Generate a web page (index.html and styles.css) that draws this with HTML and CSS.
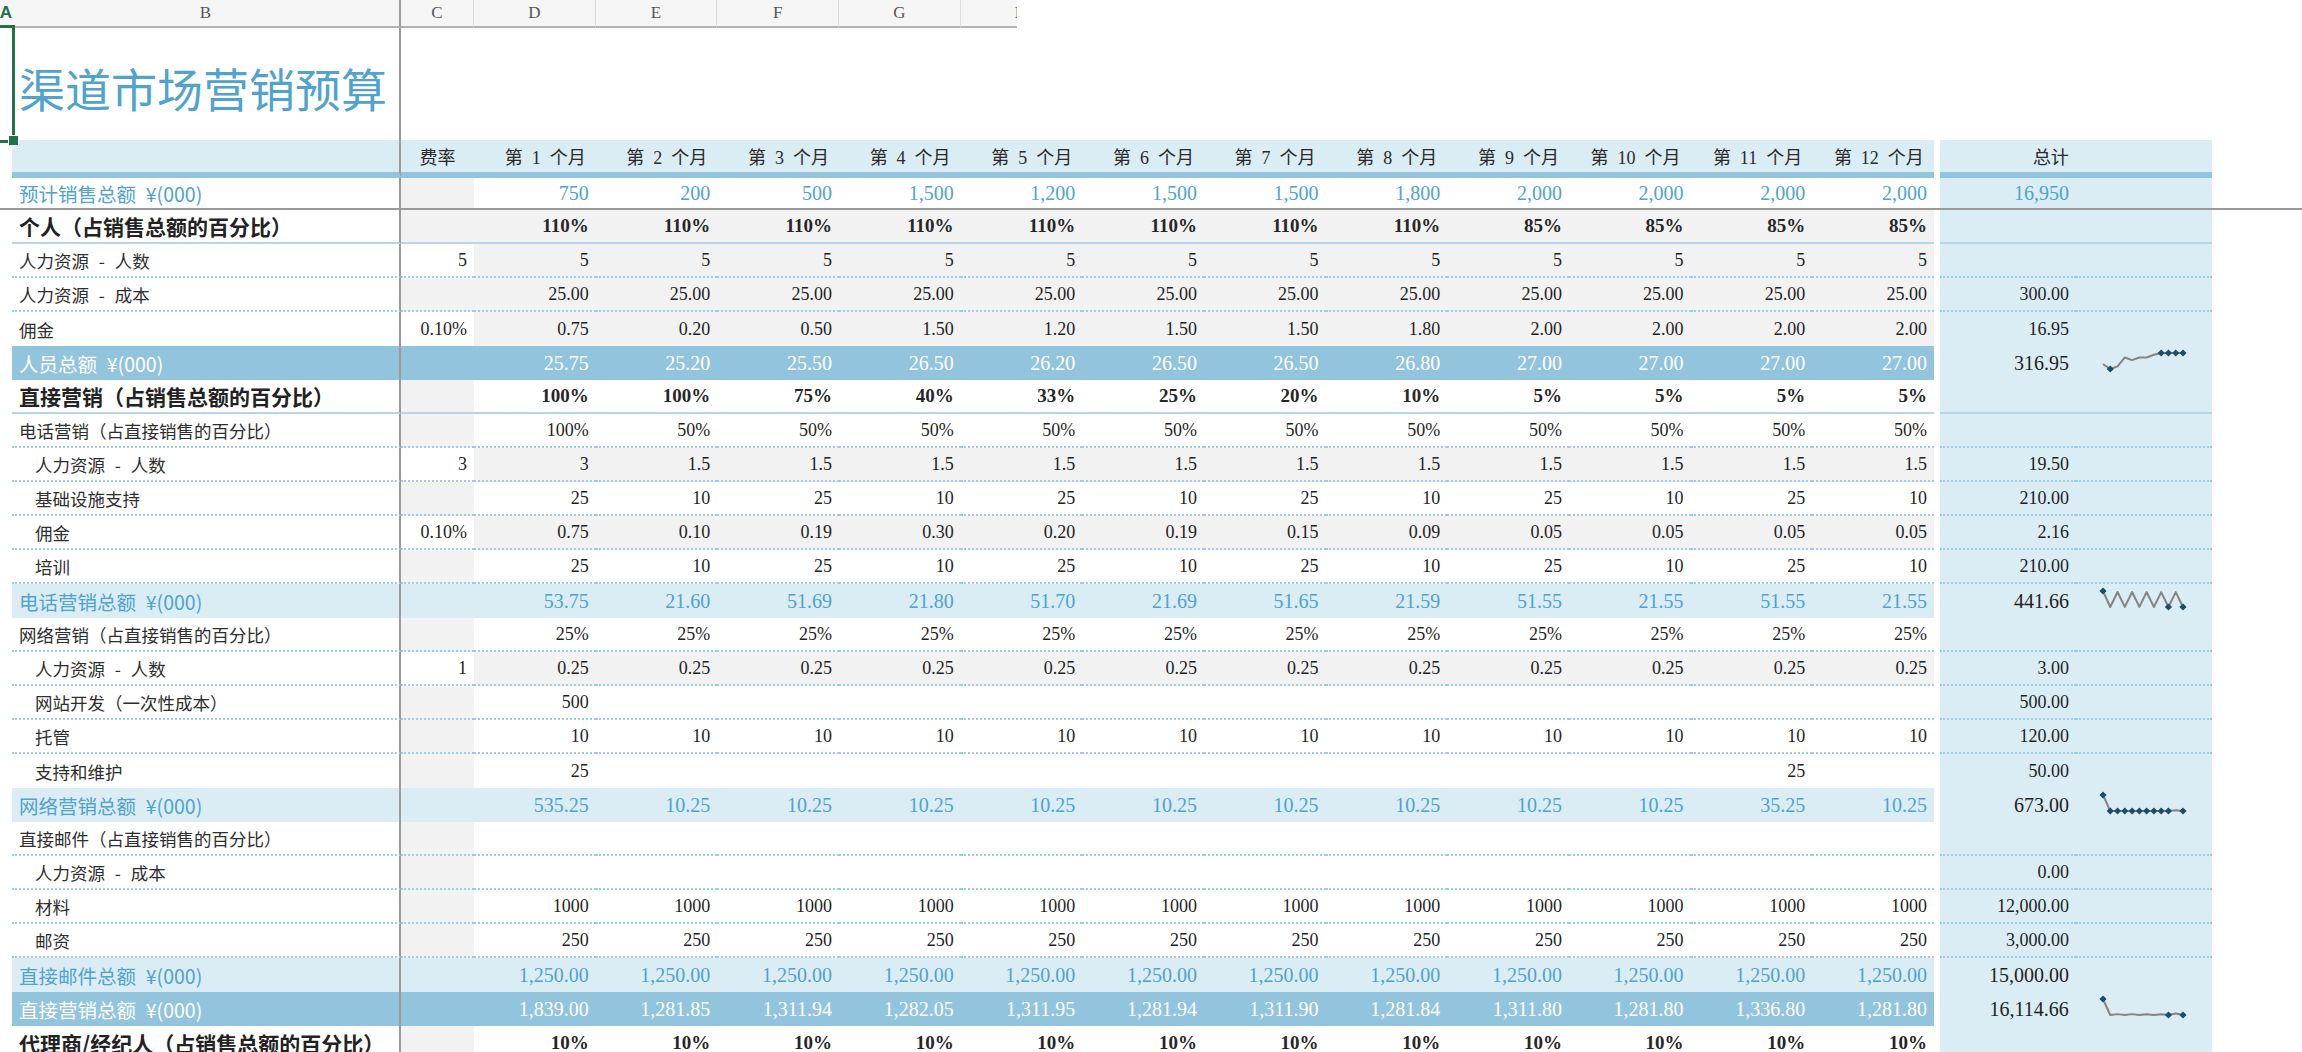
FILE: index.html
```html
<!DOCTYPE html>
<html lang="zh-CN">
<head>
<meta charset="utf-8">
<title>渠道市场营销预算</title>
<link rel="stylesheet" href="styles.css">
</head>
<body>
<div class="colhead">
  <div class="ha">A</div><div class="hb">B</div><div>C</div><div>D</div><div>E</div><div>F</div><div>G</div><div>H</div>
</div>
<div class="titlerow"><div class="a"></div><div class="b">渠道市场营销预算</div><div></div></div>

<div class="row hdr"><div class="a"></div><div class="b"></div><div class="c">费率</div><div class="m">第&ensp;1&ensp;个月</div><div class="m">第&ensp;2&ensp;个月</div><div class="m">第&ensp;3&ensp;个月</div><div class="m">第&ensp;4&ensp;个月</div><div class="m">第&ensp;5&ensp;个月</div><div class="m">第&ensp;6&ensp;个月</div><div class="m">第&ensp;7&ensp;个月</div><div class="m">第&ensp;8&ensp;个月</div><div class="m">第&ensp;9&ensp;个月</div><div class="m">第&ensp;10&ensp;个月</div><div class="m">第&ensp;11&ensp;个月</div><div class="m">第&ensp;12&ensp;个月</div><div class="gap"></div><div class="t">总计</div><div class="s"></div><div class="f"></div></div>

<div class="row sales"><div class="a"></div><div class="b">预计销售总额&ensp;¥(000)</div><div class="c"></div><div class="m">750</div><div class="m">200</div><div class="m">500</div><div class="m">1,500</div><div class="m">1,200</div><div class="m">1,500</div><div class="m">1,500</div><div class="m">1,800</div><div class="m">2,000</div><div class="m">2,000</div><div class="m">2,000</div><div class="m">2,000</div><div class="gap"></div><div class="t">16,950</div><div class="s"></div><div class="f"></div></div>

<div class="row sec sol g"><div class="a"></div><div class="b">个人（占销售总额的百分比）</div><div class="c"></div><div class="m">110%</div><div class="m">110%</div><div class="m">110%</div><div class="m">110%</div><div class="m">110%</div><div class="m">110%</div><div class="m">110%</div><div class="m">110%</div><div class="m">85%</div><div class="m">85%</div><div class="m">85%</div><div class="m">85%</div><div class="gap"></div><div class="t"></div><div class="s"></div><div class="f"></div></div>

<div class="row dot g"><div class="a"></div><div class="b">人力资源&ensp;&#8202;-&#8202;&ensp;人数</div><div class="c in">5</div><div class="m">5</div><div class="m">5</div><div class="m">5</div><div class="m">5</div><div class="m">5</div><div class="m">5</div><div class="m">5</div><div class="m">5</div><div class="m">5</div><div class="m">5</div><div class="m">5</div><div class="m">5</div><div class="gap"></div><div class="t"></div><div class="s"></div><div class="f"></div></div>

<div class="row dot g"><div class="a"></div><div class="b">人力资源&ensp;&#8202;-&#8202;&ensp;成本</div><div class="c"></div><div class="m">25.00</div><div class="m">25.00</div><div class="m">25.00</div><div class="m">25.00</div><div class="m">25.00</div><div class="m">25.00</div><div class="m">25.00</div><div class="m">25.00</div><div class="m">25.00</div><div class="m">25.00</div><div class="m">25.00</div><div class="m">25.00</div><div class="gap"></div><div class="t">300.00</div><div class="s"></div><div class="f"></div></div>

<div class="row g"><div class="a"></div><div class="b">佣金</div><div class="c in">0.10%</div><div class="m">0.75</div><div class="m">0.20</div><div class="m">0.50</div><div class="m">1.50</div><div class="m">1.20</div><div class="m">1.50</div><div class="m">1.50</div><div class="m">1.80</div><div class="m">2.00</div><div class="m">2.00</div><div class="m">2.00</div><div class="m">2.00</div><div class="gap"></div><div class="t">16.95</div><div class="s"></div><div class="f"></div></div>

<div class="row td"><div class="a"></div><div class="b">人员总额&ensp;¥(000)</div><div class="c"></div><div class="m">25.75</div><div class="m">25.20</div><div class="m">25.50</div><div class="m">26.50</div><div class="m">26.20</div><div class="m">26.50</div><div class="m">26.50</div><div class="m">26.80</div><div class="m">27.00</div><div class="m">27.00</div><div class="m">27.00</div><div class="m">27.00</div><div class="gap"></div><div class="t">316.95</div><div class="s"><svg class="spark" width="86" height="20" viewBox="0 0 86 20"><polyline points="3,13.11 10.27,18 17.55,15.33 24.82,6.44 32.09,9.11 39.36,6.44 46.64,6.44 53.91,3.78 61.18,2 68.45,2 75.73,2 83,2"/><path d="M10.27 14.4l3.6 3.6-3.6 3.6-3.6-3.6zM61.18 -1.6l3.6 3.6-3.6 3.6-3.6-3.6zM68.45 -1.6l3.6 3.6-3.6 3.6-3.6-3.6zM75.73 -1.6l3.6 3.6-3.6 3.6-3.6-3.6zM83 -1.6l3.6 3.6-3.6 3.6-3.6-3.6z"/></svg></div><div class="f"></div></div>

<div class="row sec sol"><div class="a"></div><div class="b">直接营销（占销售总额的百分比）</div><div class="c"></div><div class="m">100%</div><div class="m">100%</div><div class="m">75%</div><div class="m">40%</div><div class="m">33%</div><div class="m">25%</div><div class="m">20%</div><div class="m">10%</div><div class="m">5%</div><div class="m">5%</div><div class="m">5%</div><div class="m">5%</div><div class="gap"></div><div class="t"></div><div class="s"></div><div class="f"></div></div>

<div class="row dot"><div class="a"></div><div class="b">电话营销（占直接销售的百分比）</div><div class="c"></div><div class="m">100%</div><div class="m">50%</div><div class="m">50%</div><div class="m">50%</div><div class="m">50%</div><div class="m">50%</div><div class="m">50%</div><div class="m">50%</div><div class="m">50%</div><div class="m">50%</div><div class="m">50%</div><div class="m">50%</div><div class="gap"></div><div class="t"></div><div class="s"></div><div class="f"></div></div>

<div class="row dot g"><div class="a"></div><div class="b i2">人力资源&ensp;&#8202;-&#8202;&ensp;人数</div><div class="c in">3</div><div class="m">3</div><div class="m">1.5</div><div class="m">1.5</div><div class="m">1.5</div><div class="m">1.5</div><div class="m">1.5</div><div class="m">1.5</div><div class="m">1.5</div><div class="m">1.5</div><div class="m">1.5</div><div class="m">1.5</div><div class="m">1.5</div><div class="gap"></div><div class="t">19.50</div><div class="s"></div><div class="f"></div></div>

<div class="row dot"><div class="a"></div><div class="b i2">基础设施支持</div><div class="c"></div><div class="m">25</div><div class="m">10</div><div class="m">25</div><div class="m">10</div><div class="m">25</div><div class="m">10</div><div class="m">25</div><div class="m">10</div><div class="m">25</div><div class="m">10</div><div class="m">25</div><div class="m">10</div><div class="gap"></div><div class="t">210.00</div><div class="s"></div><div class="f"></div></div>

<div class="row dot g"><div class="a"></div><div class="b i2">佣金</div><div class="c in">0.10%</div><div class="m">0.75</div><div class="m">0.10</div><div class="m">0.19</div><div class="m">0.30</div><div class="m">0.20</div><div class="m">0.19</div><div class="m">0.15</div><div class="m">0.09</div><div class="m">0.05</div><div class="m">0.05</div><div class="m">0.05</div><div class="m">0.05</div><div class="gap"></div><div class="t">2.16</div><div class="s"></div><div class="f"></div></div>

<div class="row dot"><div class="a"></div><div class="b i2">培训</div><div class="c"></div><div class="m">25</div><div class="m">10</div><div class="m">25</div><div class="m">10</div><div class="m">25</div><div class="m">10</div><div class="m">25</div><div class="m">10</div><div class="m">25</div><div class="m">10</div><div class="m">25</div><div class="m">10</div><div class="gap"></div><div class="t">210.00</div><div class="s"></div><div class="f"></div></div>

<div class="row tl"><div class="a"></div><div class="b">电话营销总额&ensp;¥(000)</div><div class="c"></div><div class="m">53.75</div><div class="m">21.60</div><div class="m">51.69</div><div class="m">21.80</div><div class="m">51.70</div><div class="m">21.69</div><div class="m">51.65</div><div class="m">21.59</div><div class="m">51.55</div><div class="m">21.55</div><div class="m">51.55</div><div class="m">21.55</div><div class="gap"></div><div class="t">441.66</div><div class="s"><svg class="spark" width="86" height="20" viewBox="0 0 86 20"><polyline points="3,2 10.27,17.98 17.55,3.02 24.82,17.88 32.09,3.02 39.36,17.93 46.64,3.04 53.91,17.98 61.18,3.09 68.45,18 75.73,3.09 83,18"/><path d="M3 -1.6l3.6 3.6-3.6 3.6-3.6-3.6zM68.45 14.4l3.6 3.6-3.6 3.6-3.6-3.6zM83 14.4l3.6 3.6-3.6 3.6-3.6-3.6z"/></svg></div><div class="f"></div></div>

<div class="row dot"><div class="a"></div><div class="b">网络营销（占直接销售的百分比）</div><div class="c"></div><div class="m">25%</div><div class="m">25%</div><div class="m">25%</div><div class="m">25%</div><div class="m">25%</div><div class="m">25%</div><div class="m">25%</div><div class="m">25%</div><div class="m">25%</div><div class="m">25%</div><div class="m">25%</div><div class="m">25%</div><div class="gap"></div><div class="t"></div><div class="s"></div><div class="f"></div></div>

<div class="row dot g"><div class="a"></div><div class="b i2">人力资源&ensp;&#8202;-&#8202;&ensp;人数</div><div class="c in">1</div><div class="m">0.25</div><div class="m">0.25</div><div class="m">0.25</div><div class="m">0.25</div><div class="m">0.25</div><div class="m">0.25</div><div class="m">0.25</div><div class="m">0.25</div><div class="m">0.25</div><div class="m">0.25</div><div class="m">0.25</div><div class="m">0.25</div><div class="gap"></div><div class="t">3.00</div><div class="s"></div><div class="f"></div></div>

<div class="row dot"><div class="a"></div><div class="b i2">网站开发（一次性成本）</div><div class="c"></div><div class="m">500</div><div class="m"></div><div class="m"></div><div class="m"></div><div class="m"></div><div class="m"></div><div class="m"></div><div class="m"></div><div class="m"></div><div class="m"></div><div class="m"></div><div class="m"></div><div class="gap"></div><div class="t">500.00</div><div class="s"></div><div class="f"></div></div>

<div class="row dot"><div class="a"></div><div class="b i2">托管</div><div class="c"></div><div class="m">10</div><div class="m">10</div><div class="m">10</div><div class="m">10</div><div class="m">10</div><div class="m">10</div><div class="m">10</div><div class="m">10</div><div class="m">10</div><div class="m">10</div><div class="m">10</div><div class="m">10</div><div class="gap"></div><div class="t">120.00</div><div class="s"></div><div class="f"></div></div>

<div class="row"><div class="a"></div><div class="b i2">支持和维护</div><div class="c"></div><div class="m">25</div><div class="m"></div><div class="m"></div><div class="m"></div><div class="m"></div><div class="m"></div><div class="m"></div><div class="m"></div><div class="m"></div><div class="m"></div><div class="m">25</div><div class="m"></div><div class="gap"></div><div class="t">50.00</div><div class="s"></div><div class="f"></div></div>

<div class="row tl"><div class="a"></div><div class="b">网络营销总额&ensp;¥(000)</div><div class="c"></div><div class="m">535.25</div><div class="m">10.25</div><div class="m">10.25</div><div class="m">10.25</div><div class="m">10.25</div><div class="m">10.25</div><div class="m">10.25</div><div class="m">10.25</div><div class="m">10.25</div><div class="m">10.25</div><div class="m">35.25</div><div class="m">10.25</div><div class="gap"></div><div class="t">673.00</div><div class="s"><svg class="spark" width="86" height="20" viewBox="0 0 86 20"><polyline points="3,2 10.27,18 17.55,18 24.82,18 32.09,18 39.36,18 46.64,18 53.91,18 61.18,18 68.45,18 75.73,17.24 83,18"/><path d="M3 -1.6l3.6 3.6-3.6 3.6-3.6-3.6zM10.27 14.4l3.6 3.6-3.6 3.6-3.6-3.6zM17.55 14.4l3.6 3.6-3.6 3.6-3.6-3.6zM24.82 14.4l3.6 3.6-3.6 3.6-3.6-3.6zM32.09 14.4l3.6 3.6-3.6 3.6-3.6-3.6zM39.36 14.4l3.6 3.6-3.6 3.6-3.6-3.6zM46.64 14.4l3.6 3.6-3.6 3.6-3.6-3.6zM53.91 14.4l3.6 3.6-3.6 3.6-3.6-3.6zM61.18 14.4l3.6 3.6-3.6 3.6-3.6-3.6zM68.45 14.4l3.6 3.6-3.6 3.6-3.6-3.6zM83 14.4l3.6 3.6-3.6 3.6-3.6-3.6z"/></svg></div><div class="f"></div></div>

<div class="row dot"><div class="a"></div><div class="b">直接邮件（占直接销售的百分比）</div><div class="c"></div><div class="m"></div><div class="m"></div><div class="m"></div><div class="m"></div><div class="m"></div><div class="m"></div><div class="m"></div><div class="m"></div><div class="m"></div><div class="m"></div><div class="m"></div><div class="m"></div><div class="gap"></div><div class="t"></div><div class="s"></div><div class="f"></div></div>

<div class="row dot"><div class="a"></div><div class="b i2">人力资源&ensp;&#8202;-&#8202;&ensp;成本</div><div class="c"></div><div class="m"></div><div class="m"></div><div class="m"></div><div class="m"></div><div class="m"></div><div class="m"></div><div class="m"></div><div class="m"></div><div class="m"></div><div class="m"></div><div class="m"></div><div class="m"></div><div class="gap"></div><div class="t">0.00</div><div class="s"></div><div class="f"></div></div>

<div class="row dot"><div class="a"></div><div class="b i2">材料</div><div class="c"></div><div class="m">1000</div><div class="m">1000</div><div class="m">1000</div><div class="m">1000</div><div class="m">1000</div><div class="m">1000</div><div class="m">1000</div><div class="m">1000</div><div class="m">1000</div><div class="m">1000</div><div class="m">1000</div><div class="m">1000</div><div class="gap"></div><div class="t">12,000.00</div><div class="s"></div><div class="f"></div></div>

<div class="row dot"><div class="a"></div><div class="b i2">邮资</div><div class="c"></div><div class="m">250</div><div class="m">250</div><div class="m">250</div><div class="m">250</div><div class="m">250</div><div class="m">250</div><div class="m">250</div><div class="m">250</div><div class="m">250</div><div class="m">250</div><div class="m">250</div><div class="m">250</div><div class="gap"></div><div class="t">3,000.00</div><div class="s"></div><div class="f"></div></div>

<div class="row tl"><div class="a"></div><div class="b">直接邮件总额&ensp;¥(000)</div><div class="c"></div><div class="m">1,250.00</div><div class="m">1,250.00</div><div class="m">1,250.00</div><div class="m">1,250.00</div><div class="m">1,250.00</div><div class="m">1,250.00</div><div class="m">1,250.00</div><div class="m">1,250.00</div><div class="m">1,250.00</div><div class="m">1,250.00</div><div class="m">1,250.00</div><div class="m">1,250.00</div><div class="gap"></div><div class="t">15,000.00</div><div class="s"></div><div class="f"></div></div>

<div class="row td"><div class="a"></div><div class="b">直接营销总额&ensp;¥(000)</div><div class="c"></div><div class="m">1,839.00</div><div class="m">1,281.85</div><div class="m">1,311.94</div><div class="m">1,282.05</div><div class="m">1,311.95</div><div class="m">1,281.94</div><div class="m">1,311.90</div><div class="m">1,281.84</div><div class="m">1,311.80</div><div class="m">1,281.80</div><div class="m">1,336.80</div><div class="m">1,281.80</div><div class="gap"></div><div class="t">16,114.66</div><div class="s"><svg class="spark" width="86" height="20" viewBox="0 0 86 20"><polyline points="3,2 10.27,18 17.55,17.13 24.82,17.99 32.09,17.13 39.36,18 46.64,17.14 53.91,18 61.18,17.14 68.45,18 75.73,16.42 83,18"/><path d="M3 -1.6l3.6 3.6-3.6 3.6-3.6-3.6zM68.45 14.4l3.6 3.6-3.6 3.6-3.6-3.6zM83 14.4l3.6 3.6-3.6 3.6-3.6-3.6z"/></svg></div><div class="f"></div></div>

<div class="row sec"><div class="a"></div><div class="b">代理商/经纪人（占销售总额的百分比）</div><div class="c"></div><div class="m">10%</div><div class="m">10%</div><div class="m">10%</div><div class="m">10%</div><div class="m">10%</div><div class="m">10%</div><div class="m">10%</div><div class="m">10%</div><div class="m">10%</div><div class="m">10%</div><div class="m">10%</div><div class="m">10%</div><div class="gap"></div><div class="t"></div><div class="s"></div><div class="f"></div></div>

<div class="sel"></div>
<div class="handle"></div>
</body>
</html>
```

FILE: styles.css
```css
* { box-sizing: border-box; margin: 0; padding: 0; }
html, body { width: 2302px; height: 1052px; overflow: hidden; background: #fff; }
body {
  position: relative;
  font-family: "Noto Sans CJK SC", "Noto Sans", sans-serif;
  color: #333;
}

/* column letter strip */
.colhead {
  display: grid;
  grid-template-columns: 12px 389px 73px repeat(5, 121.667px);
  width: 1017px;
  height: 28px;
  overflow: hidden;
}
.colhead > div {
  display: flex;
  justify-content: center;
  align-items: center;
  overflow: hidden;
  background: #f5f5f5;
  border-bottom: 2px solid #b3b3b3;
  border-right: 1px solid #dcdcdc;
  font-family: "Liberation Serif", serif;
  font-size: 17px;
  color: #555;
}
.colhead > .ha {
  justify-content: flex-end;
  border-right: none;
  border-bottom: 3px solid #217346;
  color: #217346;
  font-family: "Liberation Sans", sans-serif;
  font-weight: bold;
}
.colhead > .hb { border-right: 2px solid #9b9b9b; }

/* title */
.titlerow {
  display: grid;
  grid-template-columns: 12px 389px 1fr;
  height: 112px;
}
.titlerow .b {
  display: flex;
  align-items: center;
  padding: 6px 0 0 7px;
  border-right: 2px solid #9b9b9b;
  font-size: 46px;
  color: #4fa3cc;
  white-space: nowrap;
}

/* table rows */
.row {
  display: grid;
  grid-template-columns: 12px 389px 73px repeat(12, 121.667px) 6px 136px 136px 1fr;
  height: 34px;
}
.row > div {
  display: flex;
  align-items: center;
  white-space: nowrap;
  overflow: hidden;
}
.b {
  padding-left: 7px;
  border-right: 2px solid #9b9b9b;
  font-size: 17.5px;
  color: #2e2e2e;
}
.b.i2 { padding-left: 23px; }
.c, .m, .t {
  justify-content: flex-end;
  padding-right: 7px;
  font-family: "Liberation Serif", "Noto Sans CJK SC", serif;
  font-size: 18px;
  color: #1f1f1f;
}
.c { background: #f2f2f2; }
.c.in { background: #fff; }
.g > .m { background: #f2f2f2; }
.t, .s { background: #daecf4; }
.s { padding-left: 24px; }

.spark { overflow: visible; margin-top: -4px; }
.spark polyline { fill: none; stroke: #858585; stroke-width: 2; stroke-linejoin: round; }
.spark path { fill: #1f4d66; }

/* header row */
.row.hdr { height: 38px; }
.hdr > .b, .hdr > .c, .hdr > .m, .hdr > .t, .hdr > .s {
  background: #daecf4;
  border-bottom: 6px solid #92c4de;
}
.hdr > .c, .hdr > .m, .hdr > .t {
  font-family: "Liberation Serif", "Noto Sans CJK SC", serif;
  font-size: 18px;
  color: #2a2a2a;
}
.hdr > .c { justify-content: center; padding-right: 0; }
.hdr > .m { padding-right: 10px; }

/* forecast row */
.row.sales { height: 32px; border-bottom: 2px solid #9a9a9a; }
.sales > .b { color: #4fa3cc; font-size: 19.5px; }
.sales > .m, .sales > .t { color: #4fa3cc; font-size: 20px; }

/* section rows */
.sec > .b { font-size: 21px; font-weight: bold; color: #222; }
.sec > .m { font-size: 19px; font-weight: bold; color: #262626; }

/* subtotal rows */
.tl > .b, .tl > .c, .tl > .m { background: #daecf4; color: #4fa3cc; }
.td > .b, .td > .c, .td > .m { background: #92c4de; color: #fff; }
.tl > .b, .td > .b { font-size: 19.5px; }
.tl > .m, .td > .m, .tl > .t, .td > .t { font-size: 20px; }

/* row separators */
.dot > .b, .dot > .c, .dot > .m, .dot > .t, .dot > .s { border-bottom: 2px dotted #9ccbe4; }
.sol > .b, .sol > .c, .sol > .m, .sol > .t, .sol > .s { border-bottom: 2px solid #b5d7e9; }

/* cell selection overlay */
.sel {
  position: absolute;
  left: -10px;
  top: 25px;
  width: 25px;
  height: 118px;
  border: 3px solid #217346;
}
.handle {
  position: absolute;
  left: 8px;
  top: 135px;
  width: 11px;
  height: 11px;
  background: #217346;
  border: 1px solid #fff;
}
```
